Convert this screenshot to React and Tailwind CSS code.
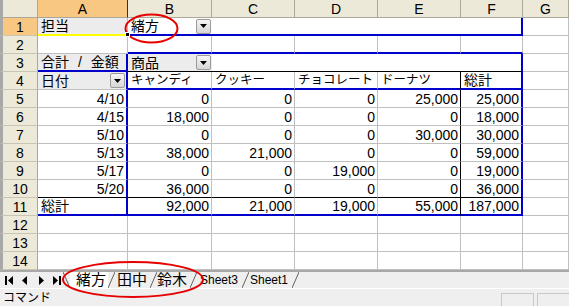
import React from "react";

const W = ["w-[90px]", "w-[84px]", "w-[83px]", "w-[83px]", "w-[83px]", "w-[62px]", "w-[46px]"];
const LETTERS = ["A", "B", "C", "D", "E", "F", "G"];

const RB = {
  g: "border-r border-r-[#c0c0c0]",
  k: "border-r border-r-black",
  b: "border-r-2 border-r-[#0000cc]",
  n: "",
};
const BB = {
  g: "border-b border-b-[#c0c0c0]",
  k: "border-b border-b-black",
  b: "border-b-2 border-b-[#0000cc]",
  y: "border-b-2 border-b-[#ffff00]",
  n: "",
};

const c = (t, r = "g", b = "g", extra = {}) => ({ t, r, b, ...extra });
const empty = () => c("");

const dates = [
  ["4/10", "0", "0", "0", "25,000", "25,000"],
  ["4/15", "18,000", "0", "0", "0", "18,000"],
  ["5/10", "0", "0", "0", "30,000", "30,000"],
  ["5/13", "38,000", "21,000", "0", "0", "59,000"],
  ["5/17", "0", "0", "19,000", "0", "19,000"],
  ["5/20", "36,000", "0", "0", "0", "36,000"],
];

const rows = [
  [
    c("担当", "g", "y", { gray: true, handle: true }),
    c("緒方", "n", "b", { dd: true }),
    c("", "n", "b"),
    c("", "n", "b"),
    c("", "n", "b"),
    c("", "b", "b"),
    empty(),
  ],
  [empty(), c("", "g", "b"), c("", "g", "b"), c("", "g", "b"), c("", "g", "b"), c("", "g", "b"), empty()],
  [
    c("合計 / 金額", "b", "b", { gray: true, wide: true }),
    c("商品", "n", "k", { gray: true, dd: true }),
    c("", "n", "k"),
    c("", "n", "k"),
    c("", "n", "k"),
    c("", "b", "k"),
    empty(),
  ],
  [
    c("日付", "b", "g", { gray: true, dd: true }),
    c("キャンディ", "g", "b", { sm: true }),
    c("クッキー", "g", "b", { sm: true }),
    c("チョコレート", "g", "b", { sm: true }),
    c("ドーナツ", "k", "b", { sm: true }),
    c("総計", "b", "b"),
    empty(),
  ],
  ...dates.map((d, i) => {
    const b = i === dates.length - 1 ? "k" : "g";
    return [
      c(d[0], "b", b, { right: true }),
      c(d[1], "g", b, { right: true }),
      c(d[2], "g", b, { right: true }),
      c(d[3], "g", b, { right: true }),
      c(d[4], "k", b, { right: true }),
      c(d[5], "b", b, { right: true }),
      empty(),
    ];
  }),
  [
    c("総計", "b", "b"),
    c("92,000", "g", "b", { right: true }),
    c("21,000", "g", "b", { right: true }),
    c("19,000", "g", "b", { right: true }),
    c("55,000", "k", "b", { right: true }),
    c("187,000", "b", "b", { right: true }),
    empty(),
  ],
  [empty(), empty(), empty(), empty(), empty(), empty(), empty()],
  [empty(), empty(), empty(), empty(), empty(), empty(), empty()],
  [empty(), empty(), empty(), empty(), empty(), empty(), empty()],
];

const DropBtn = () => (
  <div className="ml-auto mr-[1px] flex h-[15px] w-[15px] shrink-0 items-center justify-center rounded-[2px] border border-[#9a9a9a] bg-gradient-to-b from-[#f6f6f6] to-[#d6d6d6]">
    <svg width="7" height="4" viewBox="0 0 7 4">
      <polygon points="0,0 7,0 3.5,4" fill="#000" />
    </svg>
  </div>
);

const Cell = ({ cell, i }) => (
  <div
    className={`relative flex h-[18px] items-center ${W[i]} ${RB[cell.r]} ${BB[cell.b]} ${
      cell.gray ? "bg-[#ececec]" : "bg-white"
    } ${cell.right ? "justify-end pr-[2px]" : "pl-[3px]"} ${cell.sm ? "text-[12.5px]" : "text-[14px]"} ${
      cell.wide ? "[word-spacing:5px]" : ""
    } whitespace-nowrap leading-[18px] text-black`}
  >
    {cell.t && <span>{cell.t}</span>}
    {cell.dd && <DropBtn />}
    {cell.handle && <div className="absolute bottom-[-3px] right-[-3px] z-10 h-[5px] w-[5px] border border-white bg-black" />}
  </div>
);

const Slash = ({ back }) => (
  <svg width="7" height="16" viewBox="0 0 7 16" className="shrink-0">
    {back ? (
      <line x1="0" y1="0" x2="7" y2="16" stroke="#606060" strokeWidth="1" />
    ) : (
      <line x1="0" y1="16" x2="7" y2="0" stroke="#606060" strokeWidth="1" />
    )}
  </svg>
);

const NavIcon = ({ kind }) => (
  <svg width="8" height="9" viewBox="0 0 8 9">
    {kind === "first" && (
      <>
        <rect x="0" y="0" width="2" height="9" fill="#000" />
        <polygon points="8,0 8,9 3,4.5" fill="#000" />
      </>
    )}
    {kind === "prev" && <polygon points="6,0 6,9 1,4.5" fill="#000" />}
    {kind === "next" && <polygon points="2,0 2,9 7,4.5" fill="#000" />}
    {kind === "last" && (
      <>
        <polygon points="0,0 0,9 5,4.5" fill="#000" />
        <rect x="6" y="0" width="2" height="9" fill="#000" />
      </>
    )}
  </svg>
);

export default function App() {
  return (
    <div className="relative h-[306px] w-[569px] overflow-hidden bg-white font-['Liberation_Sans','Noto_Sans_CJK_JP',sans-serif]">
      {/* column headers */}
      <div className="flex h-[18px]">
        <div className="h-[18px] w-[38px] shrink-0 border-b border-l-[3px] border-r border-b-[#aca899] border-l-[#a8a8a8] border-r-[#aca899] bg-[#ece9d8]" />
        {LETTERS.map((l, i) => (
          <div
            key={l}
            className={`flex h-[18px] shrink-0 items-center justify-center border-b text-[14px] leading-[18px] ${W[i]} ${
              i === 0
                ? "border-r border-b-[#aca899] border-r-[#1a2d8a] bg-[#f8c882]"
                : "border-r border-b-[#aca899] border-r-[#aca899] bg-[#ece9d8]"
            }`}
          >
            {l}
          </div>
        ))}
      </div>

      {/* rows */}
      {rows.map((row, ri) => (
        <div key={ri} className="flex h-[18px]">
          <div
            className={`flex h-[18px] w-[38px] shrink-0 items-center justify-center border-b border-l-[3px] border-r border-b-[#c8c5b4] border-l-[#a8a8a8] border-r-[#aca899] text-[14px] leading-[18px] ${
              ri === 0 ? "bg-[#f8c882]" : "bg-[#ece9d8]"
            }`}
          >
            {ri + 1}
          </div>
          {row.map((cell, i) => (
            <Cell key={i} cell={cell} i={i} />
          ))}
        </div>
      ))}

      {/* sheet tabs */}
      <div className="flex h-[18px] items-center border-t-2 border-t-[#a8a8a8] bg-[#efefef] text-black">
        <div className="flex w-[63px] shrink-0 items-center gap-[8px] pl-[5px]">
          <NavIcon kind="first" />
          <NavIcon kind="prev" />
          <NavIcon kind="next" />
          <NavIcon kind="last" />
        </div>
        <Slash back />
        <div className="w-[38px] bg-white pl-[6px] text-[15px] leading-[16px]">緒方</div>
        <Slash />
        <div className="w-[35px] pl-[2px] text-[15px] leading-[16px]">田中</div>
        <Slash />
        <div className="w-[33px] text-[15px] leading-[16px]">鈴木</div>
        <Slash />
        <div className="w-[45px] pl-[3px] text-[12px] leading-[16px]">Sheet3</div>
        <Slash />
        <div className="w-[43px] pl-[1px] text-[12px] leading-[16px]">Sheet1</div>
        <Slash />
      </div>

      {/* status bar */}
      <div className="flex h-[18px] items-end border-t border-t-white bg-[#efefef]">
        <div className="self-center pl-[3px] text-[12px] leading-[16px]">コマンド</div>
        <div className="ml-auto flex gap-[3px]">
          <div className="h-[13px] w-[33px] border-l border-r border-t border-[#c8c8c8]" />
          <div className="h-[13px] w-[32px] border-l border-t border-[#c8c8c8]" />
        </div>
      </div>

      {/* red annotation ellipses */}
      <svg className="pointer-events-none absolute left-0 top-0" width="569" height="306">
        <ellipse cx="151.5" cy="28.5" rx="26" ry="14" fill="none" stroke="#e60000" strokeWidth="2" />
        <ellipse cx="133" cy="279.5" rx="70" ry="17.5" fill="none" stroke="#e60000" strokeWidth="2" />
      </svg>
    </div>
  );
}
